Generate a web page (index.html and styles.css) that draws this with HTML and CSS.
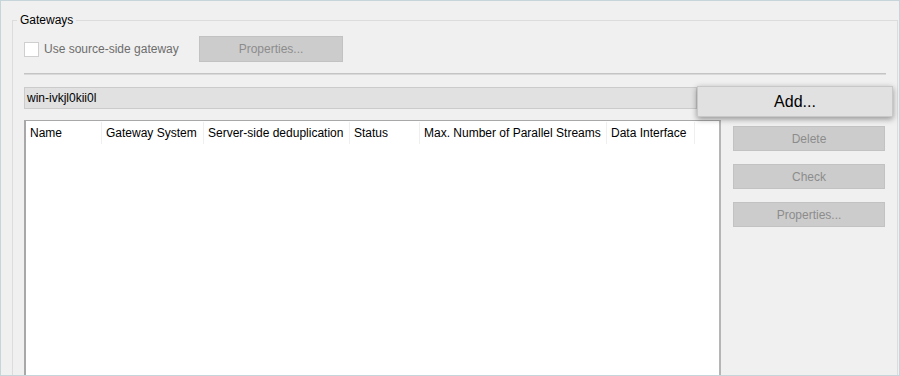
FILE: index.html
```html
<!DOCTYPE html>
<html lang="en">

    <head>
        <meta charset="UTF-8">
        <meta name="viewport" content="width=device-width, initial-scale=1.0">
        <title>Gateways</title>

        <link rel="stylesheet" href="styles.css">

    </head>

    <body>

        <div class="window">
            <fieldset class="group">
                <legend>Gateways</legend>

                <div class="top_row">
                    <label class="check_label">
                        <span class="check_box"></span>
                        Use source-side gateway
                    </label>
                    <button class="btn btn_disabled btn_wide">Properties...</button>
                </div>

                <div class="separator"></div>

                <div class="host_row">
                    <div class="host_input">win-ivkjl0kii0l</div>
                    <button class="btn btn_add">Add...</button>
                </div>

                <div class="main_row">
                    <div class="table_box">
                        <div class="table_head">
                            <div class="col col_name">Name</div>
                            <div class="col col_system">Gateway System</div>
                            <div class="col col_dedup">Server-side deduplication</div>
                            <div class="col col_status">Status</div>
                            <div class="col col_streams">Max. Number of Parallel Streams</div>
                            <div class="col col_iface">Data Interface</div>
                        </div>
                    </div>
                    <div class="side_buttons">
                        <button class="btn btn_disabled">Delete</button>
                        <button class="btn btn_disabled">Check</button>
                        <button class="btn btn_disabled">Properties...</button>
                    </div>
                </div>
            </fieldset>
        </div>

    </body>

</html>
```

FILE: styles.css
```css
body {
    margin: 0;
    background-color: #f0f0f0;
    font-family: "Liberation Sans", Arial, sans-serif;
    font-size: 12px;
    color: #000;
}

.window {
    width: 900px;
    height: 376px;
    box-sizing: border-box;
    border: 1px solid #c5d5da;
    padding: 12px 1px 0 11px;
    overflow: hidden;
}

.group {
    margin: 0;
    border: 1px solid #dcdcdc;
    padding: 8px 0 0 11px;
    height: 400px;
}

.group legend {
    padding: 0 3px;
    margin-left: -7px;
    line-height: 15px;
}

.top_row {
    display: flex;
    align-items: center;
    height: 26px;
}

.check_label {
    display: flex;
    align-items: center;
    color: #6d6d6d;
    width: 175px;
}

.check_box {
    width: 13px;
    height: 13px;
    background-color: #fff;
    border: 1px solid #cfcfcf;
    margin-right: 5px;
}

.btn {
    font-family: inherit;
    font-size: 12px;
    padding: 0;
    box-sizing: border-box;
    height: 25px;
}

.btn_disabled {
    background-color: #cccccc;
    border: 1px solid #c2c2c2;
    color: #8c8c8c;
    width: 152px;
}

.btn_wide {
    width: 144px;
    height: 26px;
}

.separator {
    margin: 11px 11px 0 0;
    height: 1px;
    border-top: 1px solid #c4c4c4;
    background-color: #d9d9d9;
}

.host_row {
    display: flex;
    align-items: flex-start;
    margin-top: 11px;
}

.host_input {
    width: 673px;
    height: 22px;
    box-sizing: border-box;
    margin-top: 1px;
    padding: 3px 2px 0;
    background-color: #e1e1e1;
    border: 1px solid #cbcbcb;
}

.btn_add {
    width: 196px;
    height: 31px;
    font-size: 16px;
    background-color: #e1e1e1;
    border: 1px solid #c8c8c8;
    box-shadow: 0 2px 6px rgba(0, 0, 0, 0.4);
    position: relative;
}

.main_row {
    display: flex;
    margin-top: 3px;
}

.table_box {
    width: 697px;
    height: 300px;
    box-sizing: border-box;
    background-color: #fff;
    border-top: 1px solid #a8a8a8;
    border-left: 2px solid #a8a8a8;
    border-right: 2px solid #b5b5b5;
}

.table_head {
    display: flex;
    height: 22px;
    margin-top: 1px;
}

.col {
    box-sizing: border-box;
    padding: 4px 0 0 4px;
    border-right: 1px solid #efefef;
    white-space: nowrap;
}

.col_name { width: 76px; }
.col_system { width: 102px; }
.col_dedup { width: 146px; }
.col_status { width: 70px; }
.col_streams { width: 187px; }
.col_iface { width: 88px; }

.side_buttons {
    display: flex;
    flex-direction: column;
    gap: 13px;
    padding: 6px 0 0 12px;
}
```
